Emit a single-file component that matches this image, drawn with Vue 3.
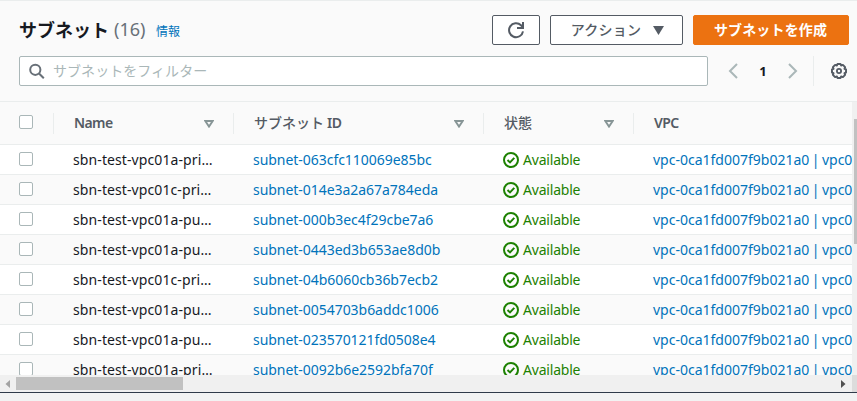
<script setup>
const columns = [
  { key: 'name', label: 'Name', sortable: true },
  { key: 'id', label: 'サブネット', suffix: 'ID', sortable: true, cjk: true },
  { key: 'state', label: '状態', sortable: true, cjk: true },
  { key: 'vpc', label: 'VPC', sortable: false },
]
const vpc = 'vpc-0ca1fd007f9b021a0 | vpc0'
const rows = [
  { name: 'sbn-test-vpc01a-pri…', id: 'subnet-063cfc110069e85bc' },
  { name: 'sbn-test-vpc01c-pri…', id: 'subnet-014e3a2a67a784eda' },
  { name: 'sbn-test-vpc01a-pu…', id: 'subnet-000b3ec4f29cbe7a6' },
  { name: 'sbn-test-vpc01a-pu…', id: 'subnet-0443ed3b653ae8d0b' },
  { name: 'sbn-test-vpc01c-pri…', id: 'subnet-04b6060cb36b7ecb2' },
  { name: 'sbn-test-vpc01a-pu…', id: 'subnet-0054703b6addc1006' },
  { name: 'sbn-test-vpc01a-pu…', id: 'subnet-023570121fd0508e4' },
  { name: 'sbn-test-vpc01a-pri…', id: 'subnet-0092b6e2592bfa70f' },
]
</script>

<template>
  <main class="panel">
    <header class="top">
      <div class="title-row">
        <h1>サブネット</h1>
        <span class="count">(16)</span>
        <a class="info">情報</a>
        <div class="actions">
          <button class="btn refresh" aria-label="更新">
            <svg width="18" height="18" viewBox="0 0 18 18" fill="none" stroke="currentColor" stroke-width="2">
              <path d="M16 10.300A7 7 0 1 1 14 4.200L16 6.200" />
              <path d="M16 1v6h-6" />
            </svg>
          </button>
          <button class="btn menu">
            <span>アクション</span>
            <svg width="11" height="9" viewBox="0 0 11 9"><path d="M0 0h11L5.500 9z" fill="currentColor" /></svg>
          </button>
          <button class="btn create">サブネットを作成</button>
        </div>
      </div>
      <div class="filter-row">
        <div class="search">
          <svg width="16" height="16" viewBox="0 0 16 16" fill="none" stroke="#687078" stroke-width="2">
            <circle cx="6.300" cy="6.800" r="5.100" />
            <path d="M10 10.500l4.800 4.800" />
          </svg>
          <span>サブネットをフィルター</span>
        </div>
        <nav class="pager">
          <svg width="10" height="16" viewBox="0 0 10 16" fill="none" stroke="#aab7b8" stroke-width="2"><path d="M9 1L2 8l7 7" /></svg>
          <b>1</b>
          <svg width="10" height="16" viewBox="0 0 10 16" fill="none" stroke="#aab7b8" stroke-width="2"><path d="M1 1l7 7-7 7" /></svg>
        </nav>
        <div class="settings">
          <svg width="16" height="16" viewBox="0 0 16 16" fill="none" stroke="#545b64">
            <path d="M6.500 1h3l.6 1.500 1.800-.6 2.200 2.200-.6 1.800L15 6.500v3l-1.500.6.6 1.800-2.200 2.200-1.800-.6L9.500 15h-3l-.6-1.500-1.800.6-2.200-2.200.6-1.800L1 9.500v-3l1.500-.6-.6-1.800 2.200-2.200 1.800.6z" stroke-width="2" stroke-linejoin="round" />
            <circle cx="8" cy="8" r="2.100" stroke-width="1.800" />
          </svg>
        </div>
      </div>
    </header>

    <section class="viewport">
      <div class="table">
        <div class="row head">
          <div class="check"><i class="box"></i></div>
          <div v-for="c in columns" :key="c.key" class="th" :class="c.key">
            <span class="label" :class="{ cjk: c.cjk }">{{ c.label }}<span v-if="c.suffix" class="suffix">{{ c.suffix }}</span></span>
            <svg v-if="c.sortable" class="sort" width="10" height="8" viewBox="0 0 10 8"><path d="M1.300 1h7.400L5 6.600z" fill="none" stroke="#879596" stroke-width="1.900" /></svg>
          </div>
        </div>
        <div v-for="r in rows" :key="r.id" class="row body">
          <div class="check"><i class="box"></i></div>
          <div class="td name">{{ r.name }}</div>
          <div class="td id link">{{ r.id }}</div>
          <div class="td state">
            <svg width="16" height="16" viewBox="0 0 16 16" fill="none" stroke="#1d8102" stroke-width="2">
              <circle cx="8" cy="8" r="7" />
              <path d="M4.500 8l2.500 2.400 4.300-4.500" />
            </svg>
            <span>Available</span>
          </div>
          <div class="td vpc link">{{ vpc }}</div>
        </div>
      </div>
      <div class="vbar"><div class="vthumb"></div></div>
    </section>
    <div class="hbar">
      <div class="track">
        <svg width="5" height="8" viewBox="0 0 5 8"><path d="M5 0v8L0.500 4z" fill="#a3a3a3" /></svg>
        <div class="hthumb"></div>
        <svg class="right" width="5" height="8" viewBox="0 0 5 8"><path d="M0 0v8L4.500 4z" fill="#505050" /></svg>
      </div>
      <div class="corner"></div>
    </div>
  </main>
</template>

<style>
body { background: #f2f3f3; overflow: hidden; }
</style>

<style scoped>
* { box-sizing: border-box; }
.panel {
  width: 857px;
  height: 393px;
  background: #fafafa;
  border-top: 1px solid #eaeded;
  border-bottom: 1px solid #2f3b4a;
  font-family: "Noto Sans", "Noto Sans CJK JP", sans-serif;
  font-size: 14px;
  color: #16191f;
}
svg { display: block; flex: none; }
.top { height: 101px; padding: 14px 8px 0 19px; border-bottom: 1px solid #eaeded; }
.title-row { display: flex; align-items: center; height: 30px; }
h1 { margin: 0; width: 95px; font-family: "Noto Sans CJK JP", sans-serif; font-size: 18px; line-height: 28px; padding-bottom: 2px; font-weight: 700; white-space: nowrap; }
.count { width: 42px; font-size: 18px; line-height: 28px; padding-bottom: 2px; color: #687078; }
.info { font-size: 12px; line-height: 18px; color: #0073bb; padding-top: 3px; }
.actions { display: flex; gap: 10px; margin-left: auto; }
.btn {
  display: flex; align-items: center; justify-content: center;
  height: 30px; padding: 0; border: 1px solid #545b64; border-radius: 2px;
  background: #fff; color: #545b64;
  font: 700 14px/26px "Noto Sans CJK JP", sans-serif;
  white-space: nowrap;
}
.refresh { width: 48px; }
.menu { width: 133px; gap: 12px; padding-left: 2px; font-weight: 500; }
.menu span { padding-bottom: 2px; letter-spacing: .2px; }
.create { width: 156px; padding: 0 1px 2px 0; letter-spacing: .15px; border-color: #ec7211; background: #ec7211; color: #fff; }
.filter-row { display: flex; height: 30px; margin-top: 11px; }
.search { display: flex; align-items: center; gap: 8px; width: 689px; padding-left: 9px; border: 1px solid #aab7b8; border-radius: 2px; background: #fff; color: #aab7b8; }
.search span { font-family: "Noto Sans CJK JP", sans-serif; line-height: 26px; padding-bottom: 2px; letter-spacing: .05px; }
.pager { display: flex; align-items: center; justify-content: space-between; width: 70px; margin-left: 20px; }
.pager b { font-size: 13px; }
.settings { display: flex; align-items: center; justify-content: flex-end; flex: none; width: 36px; margin-left: 15px; border-left: 1px solid #eaeded; padding-right: 2px; }
.viewport { display: flex; height: 273px; overflow: hidden; }
.table { width: 852px; overflow: hidden; }
.row { display: grid; grid-template-columns: 53px 180px 250px 150px 219px; align-items: center; border-bottom: 1px solid #eaeded; }
.head { height: 43px; }
.body { height: 30px; background: #fafafa; }
.body:nth-child(even) { background: #fff; }
.check { display: flex; align-items: center; height: 100%; padding-left: 19px; }
.head .check { padding-bottom: 2px; }
.body .check { padding-bottom: 1px; }
.box { width: 14px; height: 14px; border: 1px solid #aab7b8; border-radius: 2px; background: #fff; }
.th { display: flex; align-items: center; justify-content: space-between; height: 21px; margin-top: 1px; border-left: 1px solid #eaeded; padding: 0 19px 0 20px; color: #545b64; font-weight: 600; }
.label { line-height: 20px; padding-bottom: 2px; white-space: nowrap; letter-spacing: -.6px; }
.label.cjk { font-weight: 500; letter-spacing: 0; }
.suffix { margin-left: 3px; font-weight: 600; letter-spacing: -.5px; }
.td { height: 29px; line-height: 29px; padding-left: 20px; white-space: nowrap; }
.td.name { letter-spacing: .1px; }
.td.id { letter-spacing: -.04px; }
.td.vpc { word-spacing: -1.200px; }
.link { color: #0073bb; }
.state { display: flex; align-items: center; gap: 4px; color: #1d8102; }
.td.state span { letter-spacing: -.2px; }
.th.state { color: #545b64; gap: 0; }
.vbar { width: 5px; padding: 17px 0 0 2px; background: #f0f0f0; }
.vthumb { width: 3px; height: 125px; background: #c1c1c1; }
.hbar { display: flex; height: 17px; background: #f0f0f0; }
.track { display: flex; align-items: center; width: 852px; padding: 0 6px 0 5px; }
.hthumb { width: 167px; height: 13px; margin-left: 6px; background: #c1c1c1; }
.right { margin-left: auto; }
.corner { width: 5px; background: #dcdcdc; }
</style>
